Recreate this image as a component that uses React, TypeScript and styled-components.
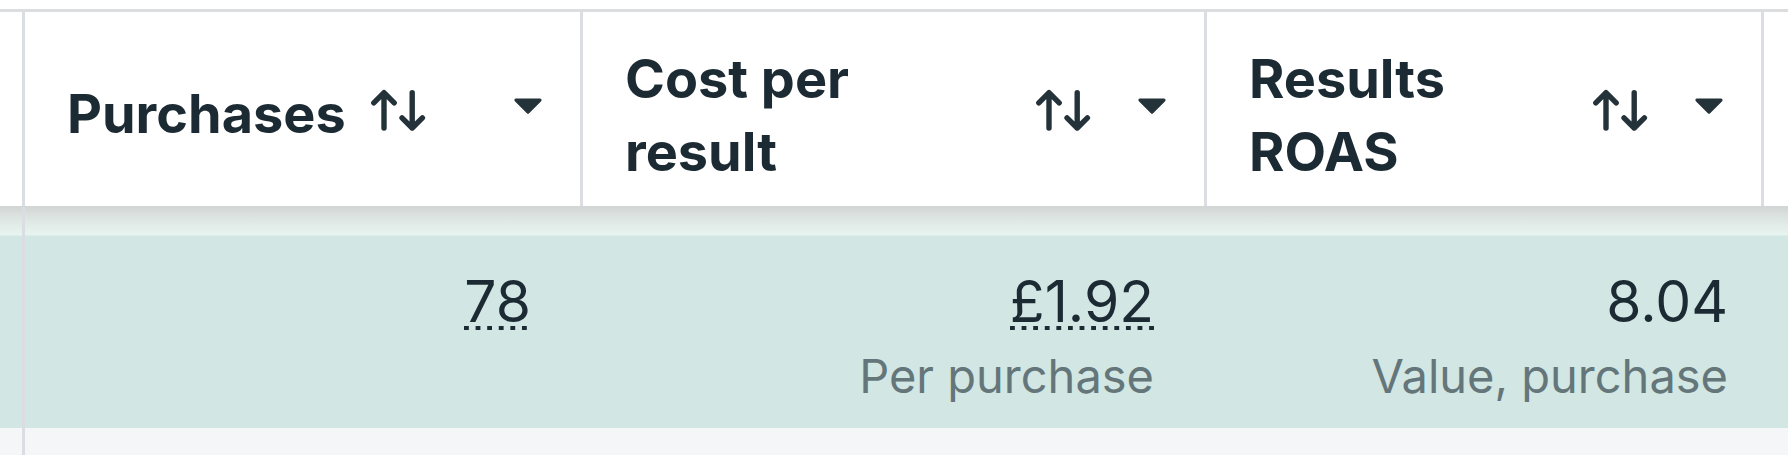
import React from "react";
import styled, { createGlobalStyle } from "styled-components";

const GlobalStyle = createGlobalStyle`
  html, body {
    margin: 0;
    padding: 0;
    background: #ffffff;
  }
  body {
    font-family: Inter, "Noto Sans", Roboto, sans-serif;
    color: #1c2b33;
  }
  * { box-sizing: border-box; }
`;

const COLS = "22px 558px 624px 557px 1fr";
const LINE = "#dadde1";

const Page = styled.div`
  padding-top: 9px;
  width: 1788px;
`;

const HeaderRow = styled.div`
  display: grid;
  grid-template-columns: ${COLS};
  height: 198px;
  border-top: 3px solid #dcdddf;
  border-bottom: 1px solid #d3d6d6;
  background: #ffffff;
`;

const HeaderCell = styled.div<{ $line?: boolean }>`
  display: flex;
  align-items: center;
  gap: 43px;
  padding: 0 37px 0 42px;
  border-left: ${(p) => (p.$line ? `3px solid ${LINE}` : "none")};
  min-width: 0;
`;

const HeaderLabel = styled.div<{ $fill?: boolean }>`
  display: flex;
  align-items: center;
  gap: 23px;
  flex: ${(p) => (p.$fill ? "1 1 auto" : "0 1 auto")};
  min-width: 0;
`;

const HeaderText = styled.span<{ $fill?: boolean }>`
  flex: ${(p) => (p.$fill ? "1 1 auto" : "none")};
  margin-top: ${(p) => (p.$fill ? "12px" : "8px")};
  font-size: 54px;
  line-height: 73px;
  font-weight: 700;
  color: #1c2b33;
  white-space: nowrap;
`;

const CaretWrap = styled.span`
  margin-left: auto;
  display: flex;
  flex-shrink: 0;
  margin-top: -7px;
`;

const SortWrap = styled.span`
  display: flex;
  flex-shrink: 0;
  margin-top: 2px;
`;

const DataRow = styled.div`
  display: grid;
  grid-template-columns: ${COLS};
  background: linear-gradient(
    180deg,
    #d2d6d5 0px,
    #dbe3e0 9px,
    #e4efeb 22px,
    #e8f4f0 28px,
    #d2e6e3 29px,
    #d2e6e3 100%
  );
`;

const DataCell = styled.div<{ $line?: boolean; $pr: number }>`
  display: flex;
  flex-direction: column;
  align-items: flex-end;
  padding: 61px ${(p) => p.$pr}px 24px 0;
  border-left: ${(p) => (p.$line ? `3px solid ${LINE}` : "none")};
`;

const Value = styled.span<{ $dotted?: boolean }>`
  font-size: 57px;
  line-height: 68px;
  font-weight: 400;
  color: #1c2b33;
  white-space: nowrap;
  background-image: ${(p) =>
    p.$dotted
      ? "linear-gradient(to right, #1c2b33 0, #1c2b33 5px, transparent 5px)"
      : "none"};
  background-size: 11.6px 4px;
  background-repeat: repeat-x;
  background-position: 0 58px;
`;

const SubText = styled.span`
  margin-top: 12px;
  font-size: 47px;
  line-height: 56px;
  font-weight: 400;
  color: #64767a;
  white-space: nowrap;
`;

const FooterBand = styled.div`
  display: grid;
  grid-template-columns: ${COLS};
  height: 27px;
  background: #f5f6f7;
`;

const FooterCell = styled.div<{ $line?: boolean }>`
  border-left: ${(p) => (p.$line ? `3px solid ${LINE}` : "none")};
`;

const SortIcon = () => (
  <svg width="60" height="42" viewBox="0 0 20 14" fill="none">
    <path
      d="M5 13V1.2M1.6 4.6L5 1.2l3.4 3.4"
      stroke="#243239"
      strokeWidth="1.8"
      strokeLinecap="round"
      strokeLinejoin="round"
    />
    <path
      d="M14.4 1.2V13M11 9.6l3.4 3.4 3.4-3.4"
      stroke="#243239"
      strokeWidth="1.8"
      strokeLinecap="round"
      strokeLinejoin="round"
    />
  </svg>
);

const Caret = () => (
  <svg width="30" height="18" viewBox="0 0 15 9">
    <path
      d="M1.5 1.5h12L7.5 7.5z"
      fill="#243239"
      stroke="#243239"
      strokeWidth="1.6"
      strokeLinejoin="round"
    />
  </svg>
);

type Column = {
  lines: string[];
  value: string;
  dotted: boolean;
  sub?: string;
  pr: number;
};

const columns: Column[] = [
  { lines: ["Purchases"], value: "78", dotted: true, pr: 49 },
  { lines: ["Cost per", "result"], value: "£1.92", dotted: true, sub: "Per purchase", pr: 50 },
  { lines: ["Results", "ROAS"], value: "8.04", dotted: false, sub: "Value, purchase", pr: 33 },
];

export default function App() {
  return (
    <>
      <GlobalStyle />
      <Page>
        <HeaderRow>
          <HeaderCell />
          {columns.map((c) => {
            const fill = c.lines.length > 1;
            return (
              <HeaderCell key={c.value} $line>
                <HeaderLabel $fill={fill}>
                  <HeaderText $fill={fill}>
                    {c.lines.map((l, i) => (
                      <React.Fragment key={l}>
                        {i > 0 && <br />}
                        {l}
                      </React.Fragment>
                    ))}
                  </HeaderText>
                  <SortWrap>
                    <SortIcon />
                  </SortWrap>
                </HeaderLabel>
                <CaretWrap>
                  <Caret />
                </CaretWrap>
              </HeaderCell>
            );
          })}
          <HeaderCell $line />
        </HeaderRow>
        <DataRow>
          <DataCell $pr={0} />
          {columns.map((c, i) => (
            <DataCell key={c.value} $line={i === 0} $pr={c.pr}>
              <Value $dotted={c.dotted}>{c.value}</Value>
              {c.sub && <SubText>{c.sub}</SubText>}
            </DataCell>
          ))}
          <DataCell $pr={0} />
        </DataRow>
        <FooterBand>
          <FooterCell />
          <FooterCell $line />
        </FooterBand>
      </Page>
    </>
  );
}
